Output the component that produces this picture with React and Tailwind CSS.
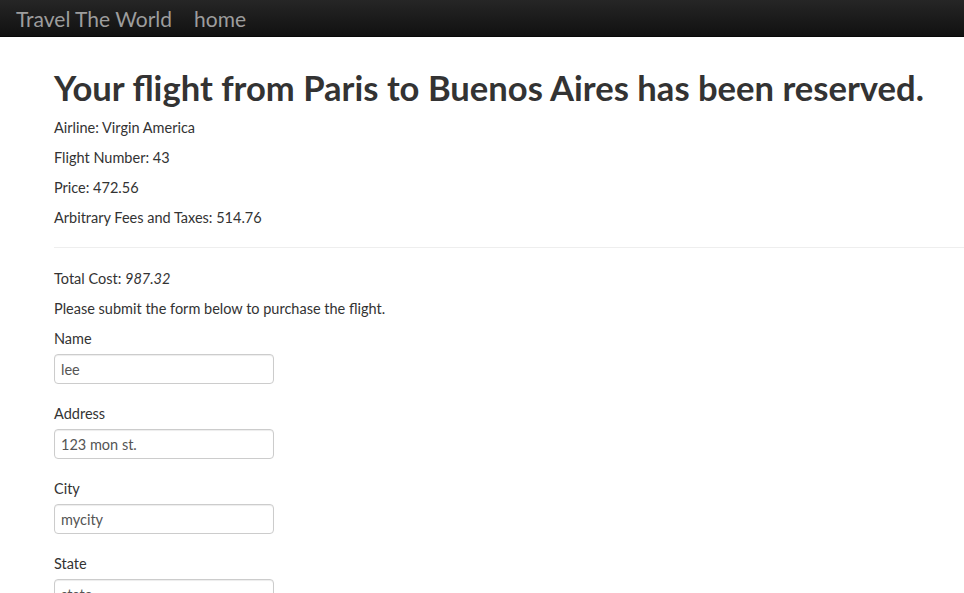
export default function App() {
  const fields = [
    { label: "Name", value: "lee" },
    { label: "Address", value: "123 mon st." },
    { label: "City", value: "mycity" },
    { label: "State", value: "state" },
    { label: "Zip", value: "12345" },
  ];

  return (
    <div className="min-h-screen bg-white text-[#333] font-['Lato',sans-serif] text-[14.5px] leading-[20px] overflow-hidden">
      <nav className="h-[37px] bg-gradient-to-b from-[#262626] to-[#111] border-b border-[#080808] flex items-center px-[16px]">
        <a className="text-[21px] text-[#9d9d9d] leading-[37px]">Travel The World</a>
        <a className="ml-[22px] text-[21px] text-[#9d9d9d] leading-[37px]">home</a>
      </nav>

      <div className="pl-[54px]">
        <h1 className="mt-[31px] mb-[10px] text-[34.6px] font-bold leading-[40px] whitespace-nowrap">
          Your flight from Paris to Buenos Aires has been reserved.
        </h1>
        <p className="mb-[10px]">Airline: Virgin America</p>
        <p className="mb-[10px]">Flight Number: 43</p>
        <p className="mb-[10px]">Price: 472.56</p>
        <p>Arbitrary Fees and Taxes: 514.76</p>

        <hr className="mt-[19px] mb-[21px] border-t border-[#eee]" />

        <p className="mb-[10px]">
          Total Cost: <em>987.32</em>
        </p>
        <p className="mb-[10px]">Please submit the form below to purchase the flight.</p>

        <form>
          {fields.map((f) => (
            <div key={f.label} className="mb-[20px]">
              <label className="block mb-[5px]">{f.label}</label>
              <input
                type="text"
                defaultValue={f.value}
                className="block w-[220px] h-[30px] px-[6px] border border-[#ccc] rounded-[4px] text-[14.5px] text-[#555] shadow-[inset_0_1px_1px_rgba(0,0,0,0.075)] outline-none"
              />
            </div>
          ))}
        </form>
      </div>
    </div>
  );
}
